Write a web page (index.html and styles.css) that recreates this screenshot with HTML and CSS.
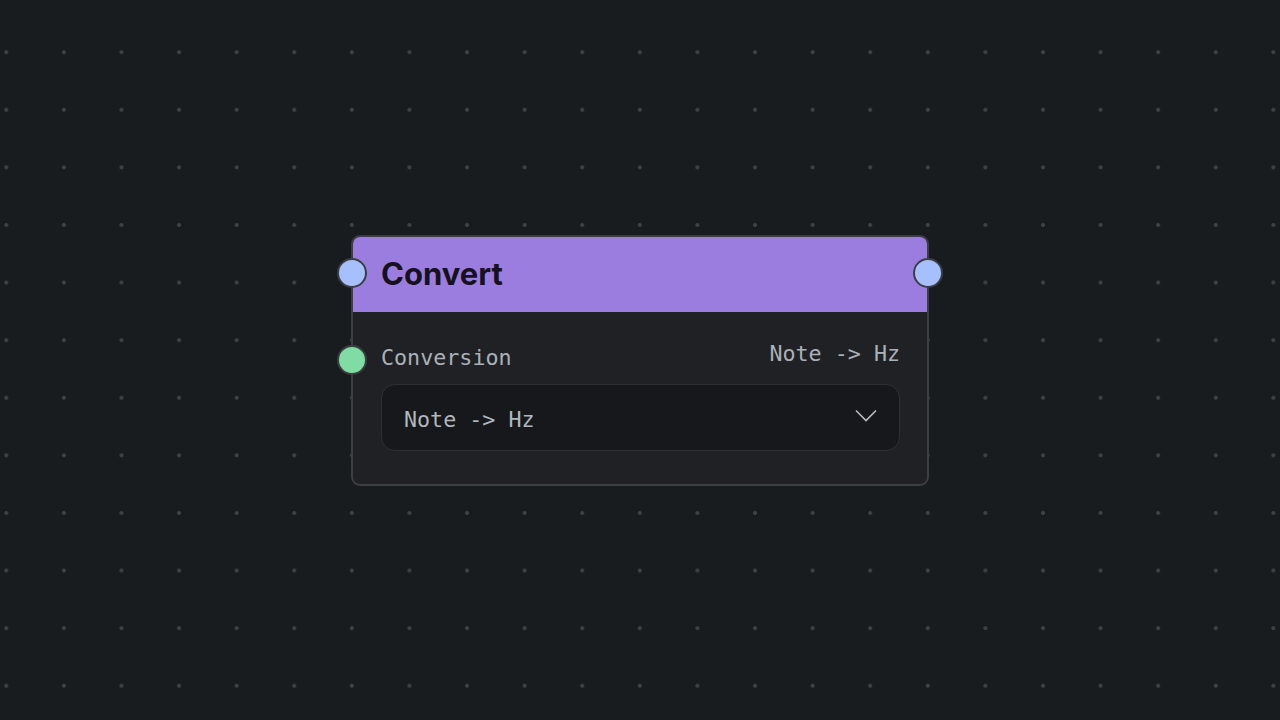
FILE: index.html
```html
<!DOCTYPE html>
<html lang="en">
<head>
    <meta charset="UTF-8">
    <meta name="viewport" content="width=device-width, initial-scale=1.0">
    <title>Convert</title>
    <link rel="stylesheet" href="styles.css">
</head>
<body>
    <div class="canvas">
        <div class="node">
            <span class="handle handle-in handle-blue"></span>
            <span class="handle handle-out handle-blue"></span>
            <div class="node-header">
                <h1>Convert</h1>
            </div>
            <div class="node-body">
                <div class="field-row">
                    <span class="handle handle-field handle-green"></span>
                    <span class="field-label">Conversion</span>
                    <span class="field-value">Note -&gt; Hz</span>
                </div>
                <div class="select">
                    <span class="select-text">Note -&gt; Hz</span>
                    <svg class="chevron" width="22" height="13" viewBox="0 0 22 13">
                        <path d="M1 1.5 L11 11.5 L21 1.5" fill="none" stroke="#b9bec4" stroke-width="1.6"/>
                    </svg>
                </div>
            </div>
        </div>
    </div>
</body>
</html>
```

FILE: styles.css
```css
html, body {
    margin: 0;
    padding: 0;
    height: 100%;
}
body {
    background-color: #191c1f;
    font-family: "DejaVu Sans Mono", monospace;
    overflow: hidden;
}
.canvas {
    position: relative;
    width: 1280px;
    height: 720px;
    background-image: radial-gradient(circle, #3e4145 1.8px, transparent 2.2px);
    background-size: 57.6px 57.6px;
    background-position: -22.5px 23.4px;
}
.node {
    position: absolute;
    left: 351px;
    top: 235px;
    width: 574px;
    border: 2px solid #3b3e43;
    border-radius: 9px;
    background-color: #1f2124;
}
.node-header {
    height: 75px;
    display: flex;
    align-items: center;
    padding-left: 28px;
    background-color: #9b7de0;
    border-radius: 7px 7px 0 0;
}
.node-header h1 {
    margin: 0;
    font-family: Inter, "Liberation Sans", sans-serif;
    font-weight: 700;
    font-size: 31px;
    color: #15121b;
    margin-top: -2px;
}
.node-body {
    padding: 33px 27px 33px 28px;
}
.field-row {
    position: relative;
    display: flex;
    justify-content: space-between;
    align-items: flex-start;
    font-size: 21.7px;
    line-height: 26px;
    color: #aab1b8;
}
.field-label {
    margin-top: 0;
}
.field-value {
    margin-top: -4px;
}
.select {
    margin-top: 13px;
    height: 65px;
    display: flex;
    align-items: center;
    justify-content: space-between;
    padding: 0 22px 0 22px;
    background-color: #16181b;
    border: 1px solid #2d3035;
    border-radius: 14px;
    font-size: 21.7px;
    color: #b0b7be;
}
.select-text {
    padding-top: 4px;
}
.chevron {
    margin-top: -5px;
}
.handle {
    position: absolute;
    width: 26px;
    height: 26px;
    border: 2px solid #3b3e43;
    border-radius: 50%;
}
.handle-blue {
    background-color: #a6c0fd;
}
.handle-green {
    background-color: #7fdca2;
}
.handle-in {
    left: -16px;
    top: 21px;
}
.handle-out {
    right: -16px;
    top: 21px;
}
.handle-field {
    left: -44px;
    top: 0;
}
```
